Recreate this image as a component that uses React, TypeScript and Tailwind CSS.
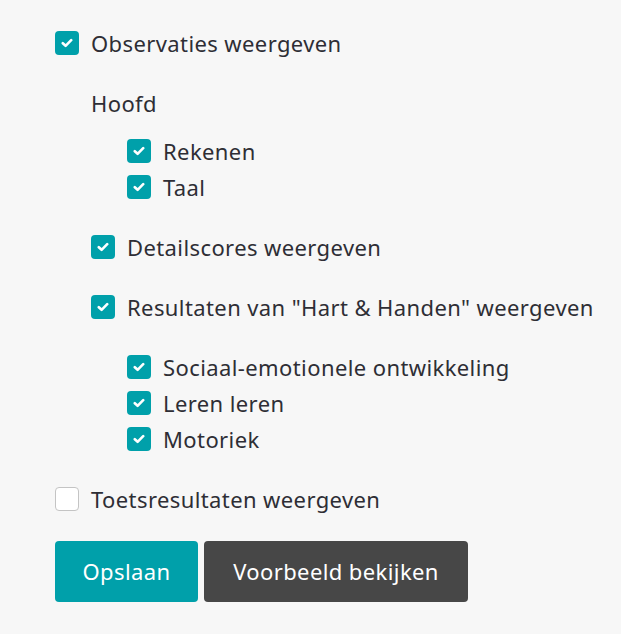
import React, { useState } from "react";

function Check({ checked, onChange }: { checked: boolean; onChange: () => void }) {
  return (
    <button
      type="button"
      onClick={onChange}
      className={
        checked
          ? "w-6 h-6 shrink-0 rounded-[4px] bg-[#00a0aa] flex items-center justify-center"
          : "w-6 h-6 shrink-0 rounded-[4px] bg-white border border-[#c4c4c4]"
      }
    >
      {checked && (
        <svg width="12" height="10" viewBox="0 0 12 10" fill="none">
          <path d="M1.8 5.2 4.6 7.8 10.2 2.2" stroke="white" strokeWidth="2.6" strokeLinecap="round" strokeLinejoin="round" />
        </svg>
      )}
    </button>
  );
}

function Row({ label, checked, onChange }: { label: string; checked: boolean; onChange: () => void }) {
  return (
    <label className="h-9 flex items-center gap-3">
      <Check checked={checked} onChange={onChange} />
      <span>{label}</span>
    </label>
  );
}

export default function App() {
  const [state, setState] = useState<Record<string, boolean>>({
    observaties: true,
    rekenen: true,
    taal: true,
    details: true,
    hart: true,
    sociaal: true,
    leren: true,
    motoriek: true,
    toets: false,
  });
  const toggle = (key: string) => () => setState((s) => ({ ...s, [key]: !s[key] }));

  return (
    <div className="min-h-[634px] bg-[#f7f7f7] pl-[55px] pt-[25px] text-[22px] tracking-[0.4px] text-[#2e2e35] font-['Noto_Sans',sans-serif]">
      <div className="flex flex-col gap-6">
        <Row label="Observaties weergeven" checked={state.observaties} onChange={toggle("observaties")} />

        <div className="pl-9 flex flex-col gap-6">
          <div className="flex flex-col gap-3">
            <div className="h-9 flex items-center">Hoofd</div>
            <div className="pl-9 flex flex-col">
              <Row label="Rekenen" checked={state.rekenen} onChange={toggle("rekenen")} />
              <Row label="Taal" checked={state.taal} onChange={toggle("taal")} />
            </div>
          </div>
          <Row label="Detailscores weergeven" checked={state.details} onChange={toggle("details")} />
          <Row label={'Resultaten van "Hart & Handen" weergeven'} checked={state.hart} onChange={toggle("hart")} />
          <div className="pl-9 flex flex-col">
            <Row label="Sociaal-emotionele ontwikkeling" checked={state.sociaal} onChange={toggle("sociaal")} />
            <Row label="Leren leren" checked={state.leren} onChange={toggle("leren")} />
            <Row label="Motoriek" checked={state.motoriek} onChange={toggle("motoriek")} />
          </div>
        </div>

        <Row label="Toetsresultaten weergeven" checked={state.toets} onChange={toggle("toets")} />

        <div className="flex gap-[6px]">
          <button className="w-[143px] h-[61px] rounded-[4px] bg-[#00a0aa] text-white">Opslaan</button>
          <button className="w-[264px] h-[61px] rounded-[4px] bg-[#474747] text-white">Voorbeeld bekijken</button>
        </div>
      </div>
    </div>
  );
}
